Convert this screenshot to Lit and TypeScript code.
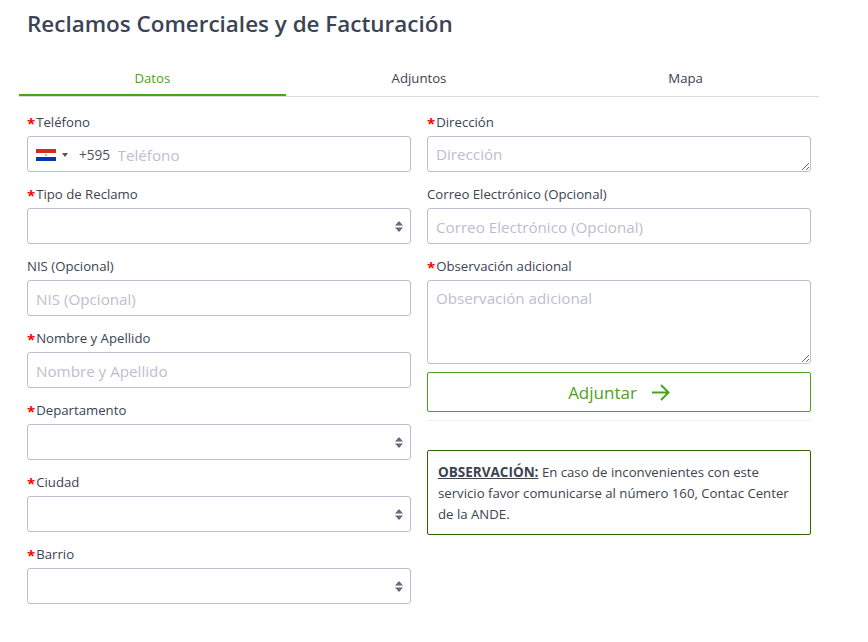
import { LitElement, html, css } from "lit";
import { customElement } from "lit/decorators.js";

const arrows = "url(\"data:image/svg+xml,%3Csvg xmlns='http://www.w3.org/2000/svg' width='8' height='11' viewBox='0 0 8 11'%3E%3Cpath fill='%23626a80' d='M4 0 8 4.500H0zM4 11 0 6.500h8z'/%3E%3C/svg%3E\")";

@customElement("app-root")
export class AppRoot extends LitElement {
  static styles = css`
    :host {
      display: block;
      font-family: "Open Sans", "Noto Sans", sans-serif;
      color: #3b4350;
      font-size: 13.2px;
      background: #fff;
      height: 642px;
      overflow: hidden;
    }
    .page { padding: 0 49px 0 19px; }
    h1 {
      margin: 0;
      padding: 8px 8px 0;
      height: 55px;
      box-sizing: border-box;
      font-size: 22.45px;
      line-height: 31px;
      font-weight: 600;
      color: #3a4454;
    }
    .tabs { display: grid; grid-template-columns: repeat(3, 1fr); border-bottom: 1px solid #d8dbe6; height: 42px; box-sizing: border-box; }
    .tab { text-align: center; line-height: 18px; padding-top: 14px; height: 41px; box-sizing: border-box; color: #3b4350; }
    .tab.active { color: #4ba31c; border-bottom: 2px solid #4ba31c; }
    .cols { display: grid; grid-template-columns: 1fr 1fr; gap: 16px; padding: 17px 8px 0; }
    .col { display: flex; flex-direction: column; min-width: 0; }
    .group { height: 72px; }
    .group.tall { height: 106px; }
    label { display: block; height: 22px; line-height: 16px; color: #3b4350; white-space: nowrap; }
    .req { color: #f00; font-weight: 700; font-size: 15px; line-height: 0; vertical-align: -2px; margin-right: 1px; }
    .field {
      display: block;
      width: 100%;
      height: 36px;
      box-sizing: border-box;
      border: 1px solid #babecd;
      border-radius: 3px;
      background: #fff;
      padding: 2px 8px 0;
      margin: 0;
      font: 15.2px/22px "Open Sans", "Noto Sans", sans-serif;
      color: #495057;
      outline: none;
    }
    .field::placeholder, .phone input::placeholder { color: #bcc0cd; opacity: 1; }
    textarea.field { padding-top: 6px; resize: vertical; }
    textarea.big { height: 84px; }
    select.field {
      appearance: none;
      background-image: ${css([arrows] as any as TemplateStringsArray)};
      background-repeat: no-repeat;
      background-position: right 7px center;
    }
    .phone { display: flex; align-items: center; padding: 2px 0 0 8px; }
    .flag { display: block; flex: none; }
    .caret { display: block; flex: none; margin-left: 6px; }
    .code { margin-left: 11px; font-size: 13.6px; color: #495057; }
    .phone input { flex: 1; min-width: 0; border: 0; outline: 0; padding: 0; margin-left: 7.500px; font: 15.2px/22px "Open Sans", "Noto Sans", sans-serif; }
    .btn {
      display: flex;
      align-items: center;
      justify-content: center;
      gap: 15px;
      height: 40px;
      box-sizing: border-box;
      border: 1px solid #4ba31c;
      border-radius: 2px;
      background: #fff;
      color: #4ba31c;
      font: 17px "Open Sans", "Noto Sans", sans-serif;
      padding: 0;
      margin-top: 8px;
    }
    hr { border: 0; border-top: 1px solid #eff0f3; margin: 8px 0 29px; width: 100%; }
    .note {
      border: 1px solid #2c6600;
      border-radius: 2px;
      padding: 11px 10px;
      line-height: 21px;
      font-size: 13.2px;
      height: 85px;
      box-sizing: border-box;
    }
    .note b { font-weight: 700; font-size: 13.5px; text-decoration: underline; }
  `;

  private fieldInput(label: string, req = false) {
    return html`<div class="group">
      <label>${req ? html`<span class="req">*</span>` : ""}${label}</label>
      <input class="field" type="text" placeholder=${label} />
    </div>`;
  }

  private fieldSelect(label: string) {
    return html`<div class="group">
      <label><span class="req">*</span>${label}</label>
      <select class="field"><option></option></select>
    </div>`;
  }

  render() {
    return html`<div class="page">
      <h1>Reclamos Comerciales y de Facturación</h1>
      <div class="tabs">
        <div class="tab active">Datos</div>
        <div class="tab">Adjuntos</div>
        <div class="tab">Mapa</div>
      </div>
      <div class="cols">
        <div class="col">
          <div class="group">
            <label><span class="req">*</span>Teléfono</label>
            <div class="field phone">
              <svg class="flag" width="20" height="12" viewBox="0 0 20 12">
                <rect width="20" height="4" fill="#d52b1e" />
                <rect y="4" width="20" height="4" fill="#fff" />
                <rect y="8" width="20" height="4" fill="#0038a8" />
                <circle cx="10" cy="6" r="1.2" fill="#b9c4a8" />
              </svg>
              <svg class="caret" width="6" height="4" viewBox="0 0 6 4"><path d="M0 0h6L3 4z" fill="#555" /></svg>
              <span class="code">+595</span>
              <input type="text" placeholder="Teléfono" />
            </div>
          </div>
          ${this.fieldSelect("Tipo de Reclamo")}
          ${this.fieldInput("NIS (Opcional)")}
          ${this.fieldInput("Nombre y Apellido", true)}
          ${this.fieldSelect("Departamento")}
          ${this.fieldSelect("Ciudad")}
          ${this.fieldSelect("Barrio")}
        </div>
        <div class="col">
          <div class="group">
            <label><span class="req">*</span>Dirección</label>
            <textarea class="field" placeholder="Dirección"></textarea>
          </div>
          ${this.fieldInput("Correo Electrónico (Opcional)")}
          <div class="group tall">
            <label><span class="req">*</span>Observación adicional</label>
            <textarea class="field big" placeholder="Observación adicional"></textarea>
          </div>
          <button class="btn">Adjuntar
            <svg width="18" height="17" viewBox="0 0 18 17" fill="none" stroke="#4ba31c" stroke-width="2"><path d="M0 8.500h16.500M9 1l7.500 7.500L9 16" /></svg>
          </button>
          <hr />
          <div class="note"><b>OBSERVACIÓN:</b> En caso de inconvenientes con este servicio favor comunicarse al número 160, Contac Center de la ANDE.</div>
        </div>
      </div>
    </div>`;
  }
}
